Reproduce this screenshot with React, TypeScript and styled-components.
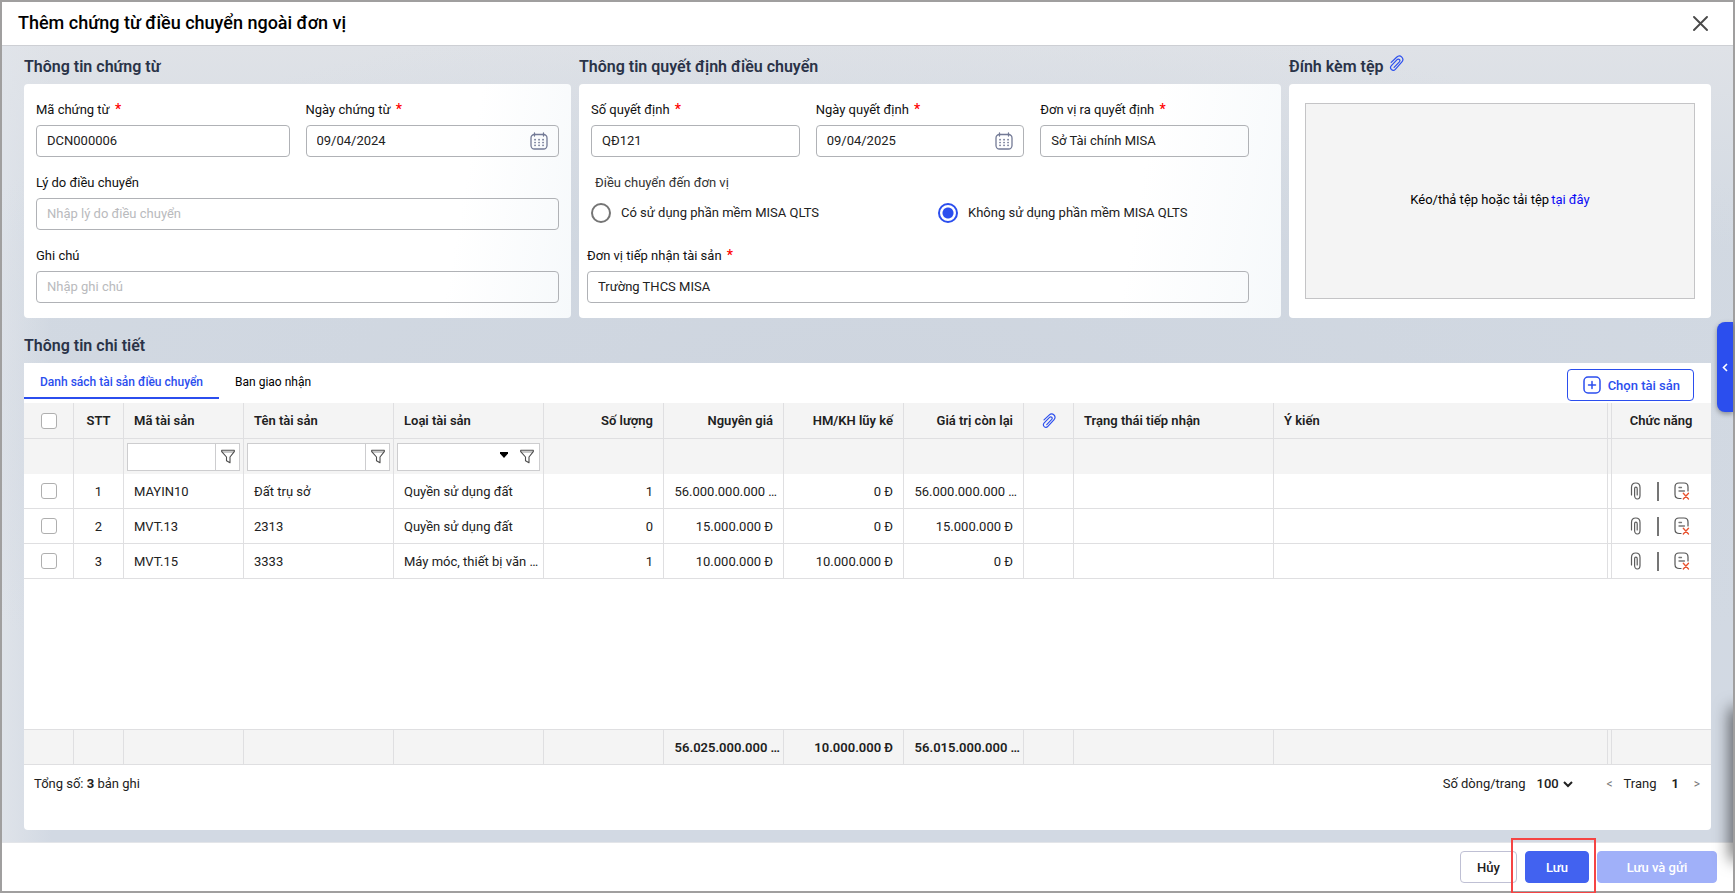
import React from "react";
import styled, { createGlobalStyle, css } from "styled-components";

const blue = "#2b4eee";
const line = "#dfdfe1";

const GlobalStyle = createGlobalStyle`
  *, *::before, *::after { box-sizing: border-box; }
  body { margin: 0; background: #fff; }
  body, button, input, select {
    font-family: Roboto, "Liberation Sans", sans-serif;
    font-size: 13px;
    color: #212121;
  }
`;

const Dialog = styled.div`
  position: relative;
  display: flex;
  flex-direction: column;
  height: calc(100vh - 1px);
  min-height: 760px;
  border: 2px solid #a09f9f;
  background: #fff;
`;

const TitleBar = styled.header`
  display: flex;
  align-items: center;
  justify-content: space-between;
  height: 44px;
  padding: 0 25px 0 16px;
  border-bottom: 1px solid #cdcfd4;
`;

const Title = styled.h1`
  margin: 0;
  padding-bottom: 2px;
  font-size: 18px;
  font-weight: 500;
  line-height: 24px;
  color: #000;
`;

const IconButton = styled.button`
  display: inline-flex;
  align-items: center;
  justify-content: center;
  padding: 0;
  border: 0;
  background: none;
  cursor: pointer;
`;

const Content = styled.main`
  flex: 1;
  min-height: 0;
  display: flex;
  flex-direction: column;
  padding: 4px 22px 12px;
  background:
    radial-gradient(ellipse 60% 50% at 50% 45%, #ced5df 0%, rgba(206, 213, 223, 0) 100%),
    linear-gradient(to right, rgba(224, 228, 234, 0.9) 0, rgba(214, 220, 230, 0) 50px),
    linear-gradient(to bottom, #dfe2e7 0, #d2d9e2 200px, #d2d9e3 100%);
`;

const InfoGrid = styled.div`
  display: grid;
  grid-template-columns: 547fr 702fr 422fr;
  gap: 0 8px;
`;

const Section = styled.section`
  display: flex;
  flex-direction: column;
  min-width: 0;
`;

const DetailSection = styled(Section)`
  flex: 1;
  min-height: 0;
  margin-top: 11px;
`;

const SectionTitle = styled.h2`
  display: flex;
  gap: 4px;
  margin: 0;
  font-size: 16px;
  font-weight: 600;
  line-height: 34px;
  color: #2a3348;
  svg { margin-top: 5px; }
`;

const Card = styled.div<{ $side?: number }>`
  flex: 1;
  display: flex;
  flex-direction: column;
  gap: 16px;
  padding: 16px ${(p) => p.$side ?? 12}px 15px 12px;
  border-radius: 4px;
  background: linear-gradient(100deg, #fff 78%, #f6f9fb 100%);
`;

const DropCard = styled(Card)`
  padding: 19px 16px;
  background: #fff;
`;

const DropZone = styled.div`
  flex: 1;
  display: flex;
  align-items: center;
  justify-content: center;
  gap: 2px;
  padding-bottom: 4px;
  border: 1px solid #c4c4c6;
  background: #f4f4f4;
  color: #000;
`;

const UploadLink = styled.a`
  color: #0a0af5;
  text-decoration: none;
`;

const FieldRow = styled.div`
  display: grid;
  grid-auto-flow: column;
  grid-auto-columns: 1fr;
  gap: 16px;
`;

const FieldBox = styled.div<{ $wide?: boolean }>`
  display: flex;
  flex-direction: column;
  gap: 5px;
  min-width: 0;
  ${(p) => p.$wide && css`margin-left: -4px;`}
`;

const Label = styled.label`
  height: 20px;
  line-height: 20px;
  color: #111;
`;

const Required = styled.span`
  margin-left: 2px;
  color: #f00;
  font-size: 14px;
  font-weight: 500;
  line-height: 16px;
`;

const InputShell = styled.div`
  display: flex;
  align-items: center;
  height: 32px;
  padding-right: 10px;
  border: 1px solid #b0b2b6;
  border-radius: 4px;
  svg { flex: none; }
`;

const TextInput = styled.input`
  flex: 1;
  min-width: 0;
  height: 28px;
  padding: 0 0 1px 10px;
  border: 0;
  outline: 0;
  background: transparent;
  &::placeholder { color: #b9babd; opacity: 1; }
`;

const RadioGroup = styled.fieldset`
  height: 57px;
  margin: 0;
  padding: 0;
  border: 0;
  min-width: 0;
`;

const Legend = styled.legend`
  padding: 0 4px;
  line-height: 20px;
  color: #333;
`;

const RadioRow = styled.div`
  display: grid;
  grid-template-columns: 347fr 311fr;
  padding-top: 10px;
`;

const RadioLabel = styled.label`
  display: flex;
  align-items: center;
  gap: 10px;
  line-height: 20px;
`;

const Radio = styled.input`
  appearance: none;
  width: 20px;
  height: 20px;
  margin: 0;
  border: 2px solid #757575;
  border-radius: 50%;
  &:checked {
    border-color: ${blue};
    background: radial-gradient(circle, ${blue} 0 5px, transparent 6px);
  }
`;

const Panel = styled.div`
  flex: 1;
  min-height: 0;
  display: flex;
  flex-direction: column;
  border-radius: 0 0 4px 4px;
  background: #fff;
`;

const PanelTop = styled.div`
  display: flex;
  justify-content: space-between;
  height: 40px;
  padding-right: 17px;
`;

const Tabs = styled.div`
  display: flex;
`;

const Tab = styled.button<{ $active?: boolean }>`
  height: 36px;
  padding: 4px 16px 0;
  border: 0;
  border-bottom: 2px solid ${(p) => (p.$active ? blue : "transparent")};
  background: none;
  color: ${(p) => (p.$active ? blue : "#000")};
  font-size: 12px;
  font-weight: ${(p) => (p.$active ? 500 : 400)};
`;

const PickButton = styled.button`
  display: flex;
  align-items: center;
  gap: 7px;
  height: 32px;
  margin-top: 6px;
  padding: 0 13px 0 15px;
  border: 1px solid ${blue};
  border-radius: 4px;
  background: #fff;
  color: ${blue};
  font-weight: 500;
`;

const TableArea = styled.div`
  flex: 1;
  min-height: 0;
`;

const Table = styled.table`
  width: 100%;
  height: 100%;
  table-layout: fixed;
  border-collapse: separate;
  border-spacing: 0;
`;

type Align = "left" | "center" | "right";

const cell = css<{ $align?: Align }>`
  height: 35px;
  padding: 0 ${(p) => (p.$align === "right" ? 10 : p.$align === "center" ? 0 : 2)}px 0
    ${(p) => (p.$align === "center" ? 0 : 10)}px;
  border-right: 1px solid ${line};
  text-align: ${(p) => p.$align ?? "left"};
  white-space: nowrap;
  overflow: hidden;
  text-overflow: ellipsis;
  &:last-child {
    padding-left: 3px;
    border-right: 0;
    background-image: linear-gradient(to right, transparent 3px, ${line} 3px 4px, transparent 4px);
  }
  svg { vertical-align: middle; }
`;

const HeadCell = styled.th`
  ${cell}
  height: 36px;
  border-bottom: 1px solid ${line};
  background-color: #f4f4f4;
  font-weight: 600;
`;

const FilterCell = styled.td`
  ${cell}
  padding: 0 3px;
  background-color: #f4f4f4;
`;

const Cell = styled.td<{ $tight?: boolean }>`
  ${cell}
  ${(p) => p.$tight && css`padding: 0 6px 0 0;`}
  border-bottom: 1px solid ${line};
`;

const SumCell = styled.td<{ $tight?: boolean }>`
  ${cell}
  height: 36px;
  ${(p) => p.$tight && css`padding: 0 3px 0 0;`}
  border-top: 1px solid ${line};
  border-bottom: 1px solid ${line};
  background-color: #f4f4f4;
  font-weight: 600;
`;

const Filler = styled.td`
  padding: 0;
`;

const Checkbox = styled.input`
  appearance: none;
  display: inline-block;
  width: 16px;
  height: 16px;
  margin: 0;
  border: 1px solid #afafaf;
  border-radius: 3px;
  background: #fff;
  vertical-align: middle;
`;

const FilterBox = styled.div`
  display: flex;
  height: 28px;
  border: 1px solid #cdcdcf;
  background: #fff;
`;

const FilterInput = styled.input`
  flex: 1;
  min-width: 0;
  padding: 0 6px;
  border: 0;
  outline: 0;
`;

const FilterSelectWrap = styled.div`
  flex: 1;
  display: flex;
  align-items: center;
  min-width: 0;
  padding: 0 7px 3px 0;
`;

const FilterSelect = styled.select`
  appearance: none;
  flex: 1;
  min-width: 0;
  height: 22px;
  border: 0;
  outline: 0;
  background: transparent;
`;

const FilterButton = styled(IconButton)<{ $divided?: boolean }>`
  width: 24px;
  ${(p) => p.$divided && css`border-left: 1px solid #cdcdcf;`}
`;

const Actions = styled.div`
  display: flex;
  align-items: center;
  justify-content: center;
  gap: 15px;
  padding-right: 2px;
`;

const Divider = styled.span`
  width: 2px;
  height: 19px;
  background: #757575;
`;

const Pager = styled.div`
  display: flex;
  align-items: center;
  justify-content: space-between;
  height: 65px;
  padding: 0 5px 28px 10px;
`;

const PagerSide = styled.div`
  display: flex;
  align-items: center;
  line-height: 20px;
`;

const SizeLabel = styled.label`
  margin-right: 7px;
`;

const SizeSelect = styled.select`
  height: 20px;
  margin-right: 25px;
  padding: 0;
  border: 0;
  outline: 0;
  background: transparent;
  font-weight: 500;
`;

const PageButton = styled(IconButton)`
  width: 18px;
  color: #777;
  font-size: 12px;
`;

const PageName = styled.span`
  margin-left: 5px;
`;

const PageNumber = styled.strong`
  margin: 0 9px 0 15px;
  font-weight: 600;
`;

const Footer = styled.footer`
  display: flex;
  align-items: center;
  justify-content: flex-end;
  gap: 8px;
  height: 49px;
  padding-right: 16px;
  border-top: 1px solid #e3e5e9;
`;

const FooterButton = styled.button<{ $kind?: "main" | "soft" }>`
  min-width: 57px;
  height: 32px;
  padding: 0 16px;
  border: 1px solid #bfc0d4;
  border-radius: 4px;
  background: #fff;
  font-weight: 500;
  ${(p) =>
    p.$kind === "main" &&
    css`min-width: 64px; border-color: #4262f0; background: #4262f0; color: #fff;`}
  ${(p) =>
    p.$kind === "soft" &&
    css`min-width: 120px; border-color: #a0b0f9; background: #a0b0f9; color: #fff;`}
`;

const HighlightWrap = styled.div`
  position: relative;
  display: flex;
  &::after {
    content: "";
    position: absolute;
    inset: -13px -7px -11px -14px;
    border: 2px solid #f54444;
    pointer-events: none;
  }
`;

const SideHandle = styled.button`
  position: absolute;
  right: 0;
  top: 320px;
  display: flex;
  align-items: center;
  justify-content: center;
  width: 16px;
  height: 90px;
  padding: 0;
  border: 0;
  border-radius: 8px 0 0 8px;
  background: ${blue};
  box-shadow: 0 2px 5px rgba(0, 0, 0, 0.35);
`;

const EdgeShadow = styled.div`
  position: absolute;
  right: 0;
  bottom: 0;
  width: 24px;
  height: 220px;
  overflow: hidden;
  pointer-events: none;
  &::after {
    content: "";
    position: absolute;
    inset: 40px -10px 34px 24px;
    box-shadow: 0 0 16px 3px rgba(0, 0, 0, 0.6);
  }
`;

const PaperclipTilted = ({ size = 17 }: { size?: number }) => (
  <svg width={size} height={size} viewBox="0 0 17 17" fill="none" stroke={blue} strokeWidth="1.2" strokeLinecap="round" strokeLinejoin="round">
    <path d="M3.2 7.4 8.6 2.2c1.7-1.6 3.9-1.4 5.2-.1 1.300 1.300 1.400 3.400-.1 5.100L7.300 14.300c-1.100 1.200-2.800 1.200-3.900.2-1.100-1.100-1.100-2.700 0-3.900l5.700-6c.7-.7 1.700-.7 2.300-.1.700.7.6 1.600 0 2.300l-5.300 5.500" />
  </svg>
);

const PaperclipUpright = () => (
  <svg width="12" height="18" viewBox="0 0 12 18" fill="none" stroke="#5c5c5c" strokeWidth="1.200" strokeLinecap="round">
    <path d="M1.500 13V5.500C1.500 2.800 3.200 1 5.800 1s4.200 1.800 4.200 4.500v8c0 2-1.100 3.500-2.700 3.500s-2.700-1.500-2.700-3.500V6.800c0-1 .5-1.600 1.300-1.600s1.300.6 1.300 1.600V13" />
  </svg>
);

const Calendar = () => (
  <svg width="18" height="18" viewBox="0 0 18 18" fill="none" stroke="#737a96" strokeWidth="1.300" strokeLinecap="round">
    <rect x="1" y="2.500" width="16" height="14.500" rx="3.500" />
    <path d="M4.500 1v3M13.500 1v3" />
    <path d="M5 7.700h.1M9 7.700h.1M13 7.700h.1M5 10.500h.1M9 10.500h.1M13 10.500h.1M5 13.300h.1M9 13.300h.1M13 13.300h.1" strokeWidth="1.700" />
  </svg>
);

const Funnel = () => (
  <svg width="14" height="15" viewBox="0 0 14 15" fill="none" stroke="#4c4c4c" strokeWidth="1.100" strokeLinejoin="round">
    <path d="M.7 1.200h12.600v1.500L9 8v5.800l-3.500-2V8L.7 2.700z" />
    <path d="M1 3h12" strokeWidth=".6" />
  </svg>
);

const PlusSquare = () => (
  <svg width="18" height="18" viewBox="0 0 18 18" fill="none" stroke={blue} strokeWidth="1.500" strokeLinecap="round">
    <rect x="1" y="1" width="16" height="16" rx="4" />
    <path d="M9 5.500v7M5.500 9h7" />
  </svg>
);

const DeleteDoc = () => (
  <svg width="16" height="18" viewBox="0 0 16 18" fill="none" strokeLinecap="round">
    <path d="M7 16.500H5.500C2.600 16.500 1 15.200 1 12.500V5c0-2.700 1.400-4 4-4h5c2.600 0 4 1.300 4 4v4" stroke="#555" strokeWidth="1.200" />
    <path d="M5 5.500h2.500M5 9h5.500" stroke="#777" strokeWidth="1.300" />
    <path d="m9.300 11.300 5.200 5.700m0-5.700-5.200 5.700" stroke="#e8502c" strokeWidth="1.300" />
  </svg>
);

const CloseIcon = () => (
  <svg width="15" height="15" viewBox="0 0 15 15" stroke="#4a4a4a" strokeWidth="1.900" strokeLinecap="round">
    <path d="m1 1 13 13M14 1 1 14" />
  </svg>
);

type FieldProps = {
  id: string;
  label: string;
  value?: string;
  placeholder?: string;
  required?: boolean;
  date?: boolean;
  wide?: boolean;
};

const Field = ({ id, label, value, placeholder, required, date, wide }: FieldProps) => (
  <FieldBox $wide={wide}>
    <Label htmlFor={id}>
      {label} {required && <Required>*</Required>}
    </Label>
    <InputShell>
      <TextInput id={id} defaultValue={value} placeholder={placeholder} />
      {date && <Calendar />}
    </InputShell>
  </FieldBox>
);

const columnWidths = [50, 50, 120, 150, 150, 120, 120, 120, 120, 50, 200, undefined, 103];

type Asset = {
  code: string;
  name: string;
  type: string;
  quantity: number;
  cost: string;
  depreciation: string;
  remaining: string;
};

const assets: Asset[] = [
  { code: "MAYIN10", name: "Đất trụ sở", type: "Quyền sử dụng đất", quantity: 1, cost: "56.000.000.000 …", depreciation: "0 Đ", remaining: "56.000.000.000 …" },
  { code: "MVT.13", name: "2313", type: "Quyền sử dụng đất", quantity: 0, cost: "15.000.000 Đ", depreciation: "0 Đ", remaining: "15.000.000 Đ" },
  { code: "MVT.15", name: "3333", type: "Máy móc, thiết bị văn …", quantity: 1, cost: "10.000.000 Đ", depreciation: "10.000.000 Đ", remaining: "0 Đ" },
];

const isShortened = (text: string) => text.endsWith("…");

const AssetTable = () => (
  <Table>
    <colgroup>
      {columnWidths.map((width, i) => (
        <col key={i} width={width} />
      ))}
    </colgroup>
    <thead>
      <tr>
        <HeadCell $align="center"><Checkbox type="checkbox" aria-label="Chọn tất cả" /></HeadCell>
        <HeadCell $align="center">STT</HeadCell>
        <HeadCell>Mã tài sản</HeadCell>
        <HeadCell>Tên tài sản</HeadCell>
        <HeadCell>Loại tài sản</HeadCell>
        <HeadCell $align="right">Số lượng</HeadCell>
        <HeadCell $align="right">Nguyên giá</HeadCell>
        <HeadCell $align="right">HM/KH lũy kế</HeadCell>
        <HeadCell $align="right">Giá trị còn lại</HeadCell>
        <HeadCell $align="center" aria-label="Đính kèm"><PaperclipTilted size={16} /></HeadCell>
        <HeadCell>Trạng thái tiếp nhận</HeadCell>
        <HeadCell>Ý kiến</HeadCell>
        <HeadCell $align="center">Chức năng</HeadCell>
      </tr>
      <tr>
        <FilterCell />
        <FilterCell />
        <FilterCell>
          <FilterBox>
            <FilterInput aria-label="Lọc mã tài sản" />
            <FilterButton $divided aria-label="Lọc"><Funnel /></FilterButton>
          </FilterBox>
        </FilterCell>
        <FilterCell>
          <FilterBox>
            <FilterInput aria-label="Lọc tên tài sản" />
            <FilterButton $divided aria-label="Lọc"><Funnel /></FilterButton>
          </FilterBox>
        </FilterCell>
        <FilterCell>
          <FilterBox>
            <FilterSelectWrap>
              <FilterSelect aria-label="Lọc loại tài sản" defaultValue="">
                <option value="" />
              </FilterSelect>
              <svg width="8" height="6" viewBox="0 0 8 6"><path d="M0 0h8v1.500L4 6 0 1.500z" fill="#000" /></svg>
            </FilterSelectWrap>
            <FilterButton aria-label="Lọc"><Funnel /></FilterButton>
          </FilterBox>
        </FilterCell>
        {columnWidths.slice(5).map((_, i) => (
          <FilterCell key={i} />
        ))}
      </tr>
    </thead>
    <tbody>
      {assets.map((asset, i) => (
        <tr key={asset.code}>
          <Cell $align="center"><Checkbox type="checkbox" aria-label={`Chọn ${asset.code}`} /></Cell>
          <Cell $align="center">{i + 1}</Cell>
          <Cell>{asset.code}</Cell>
          <Cell>{asset.name}</Cell>
          <Cell>{asset.type}</Cell>
          <Cell $align="right">{asset.quantity}</Cell>
          <Cell $align="right" $tight={isShortened(asset.cost)}>{asset.cost}</Cell>
          <Cell $align="right">{asset.depreciation}</Cell>
          <Cell $align="right" $tight={isShortened(asset.remaining)}>{asset.remaining}</Cell>
          <Cell />
          <Cell />
          <Cell />
          <Cell $align="center">
            <Actions>
              <IconButton aria-label="Đính kèm tệp"><PaperclipUpright /></IconButton>
              <Divider />
              <IconButton aria-label="Xóa"><DeleteDoc /></IconButton>
            </Actions>
          </Cell>
        </tr>
      ))}
      <tr>
        <Filler colSpan={13} />
      </tr>
    </tbody>
    <tfoot>
      <tr>
        {columnWidths.slice(0, 6).map((_, i) => (
          <SumCell key={i} />
        ))}
        <SumCell $align="right" $tight>56.025.000.000 …</SumCell>
        <SumCell $align="right">10.000.000 Đ</SumCell>
        <SumCell $align="right" $tight>56.015.000.000 …</SumCell>
        {columnWidths.slice(9).map((_, i) => (
          <SumCell key={i} />
        ))}
      </tr>
    </tfoot>
  </Table>
);

export default function App() {
  return (
    <Dialog role="dialog" aria-labelledby="dialog-title">
      <GlobalStyle />
      <TitleBar>
        <Title id="dialog-title">Thêm chứng từ điều chuyển ngoài đơn vị</Title>
        <IconButton aria-label="Đóng"><CloseIcon /></IconButton>
      </TitleBar>

      <Content>
        <InfoGrid>
          <Section>
            <SectionTitle>Thông tin chứng từ</SectionTitle>
            <Card>
              <FieldRow>
                <Field id="doc-code" label="Mã chứng từ" required value="DCN000006" />
                <Field id="doc-date" label="Ngày chứng từ" required date value="09/04/2024" />
              </FieldRow>
              <Field id="reason" label="Lý do điều chuyển" placeholder="Nhập lý do điều chuyển" />
              <Field id="note" label="Ghi chú" placeholder="Nhập ghi chú" />
            </Card>
          </Section>

          <Section>
            <SectionTitle>Thông tin quyết định điều chuyển</SectionTitle>
            <Card $side={32}>
              <FieldRow>
                <Field id="decision-no" label="Số quyết định" required value="QĐ121" />
                <Field id="decision-date" label="Ngày quyết định" required date value="09/04/2025" />
                <Field id="decision-unit" label="Đơn vị ra quyết định" required value="Sở Tài chính MISA" />
              </FieldRow>
              <RadioGroup>
                <Legend>Điều chuyển đến đơn vị</Legend>
                <RadioRow>
                  <RadioLabel>
                    <Radio type="radio" name="software" />
                    Có sử dụng phần mềm MISA QLTS
                  </RadioLabel>
                  <RadioLabel>
                    <Radio type="radio" name="software" defaultChecked />
                    Không sử dụng phần mềm MISA QLTS
                  </RadioLabel>
                </RadioRow>
              </RadioGroup>
              <Field id="receiver" label="Đơn vị tiếp nhận tài sản" required wide value="Trường THCS MISA" />
            </Card>
          </Section>

          <Section>
            <SectionTitle>Đính kèm tệp <PaperclipTilted /></SectionTitle>
            <DropCard>
              <DropZone>
                <span>Kéo/thả tệp hoặc tải tệp</span>
                <UploadLink href="#upload">tại đây</UploadLink>
              </DropZone>
            </DropCard>
          </Section>
        </InfoGrid>

        <DetailSection>
          <SectionTitle>Thông tin chi tiết</SectionTitle>
          <Panel>
            <PanelTop>
              <Tabs role="tablist">
                <Tab role="tab" aria-selected="true" $active>Danh sách tài sản điều chuyển</Tab>
                <Tab role="tab" aria-selected="false">Ban giao nhận</Tab>
              </Tabs>
              <PickButton><PlusSquare />Chọn tài sản</PickButton>
            </PanelTop>
            <TableArea>
              <AssetTable />
            </TableArea>
            <Pager>
              <span>Tổng số: <b>3</b> bản ghi</span>
              <PagerSide>
                <SizeLabel htmlFor="page-size">Số dòng/trang</SizeLabel>
                <SizeSelect id="page-size" defaultValue="100">
                  <option>100</option>
                </SizeSelect>
                <PageButton aria-label="Trang trước">&lt;</PageButton>
                <PageName>Trang</PageName>
                <PageNumber>1</PageNumber>
                <PageButton aria-label="Trang sau">&gt;</PageButton>
              </PagerSide>
            </Pager>
          </Panel>
        </DetailSection>
      </Content>

      <Footer>
        <FooterButton>Hủy</FooterButton>
        <HighlightWrap>
          <FooterButton $kind="main">Lưu</FooterButton>
        </HighlightWrap>
        <FooterButton $kind="soft">Lưu và gửi</FooterButton>
      </Footer>

      <SideHandle aria-label="Mở bảng bên">
        <svg width="6" height="9" viewBox="0 0 6 9" fill="none" stroke="#fff" strokeWidth="1.600"><path d="M5 1 1.500 4.500 5 8" /></svg>
      </SideHandle>
      <EdgeShadow />
    </Dialog>
  );
}
